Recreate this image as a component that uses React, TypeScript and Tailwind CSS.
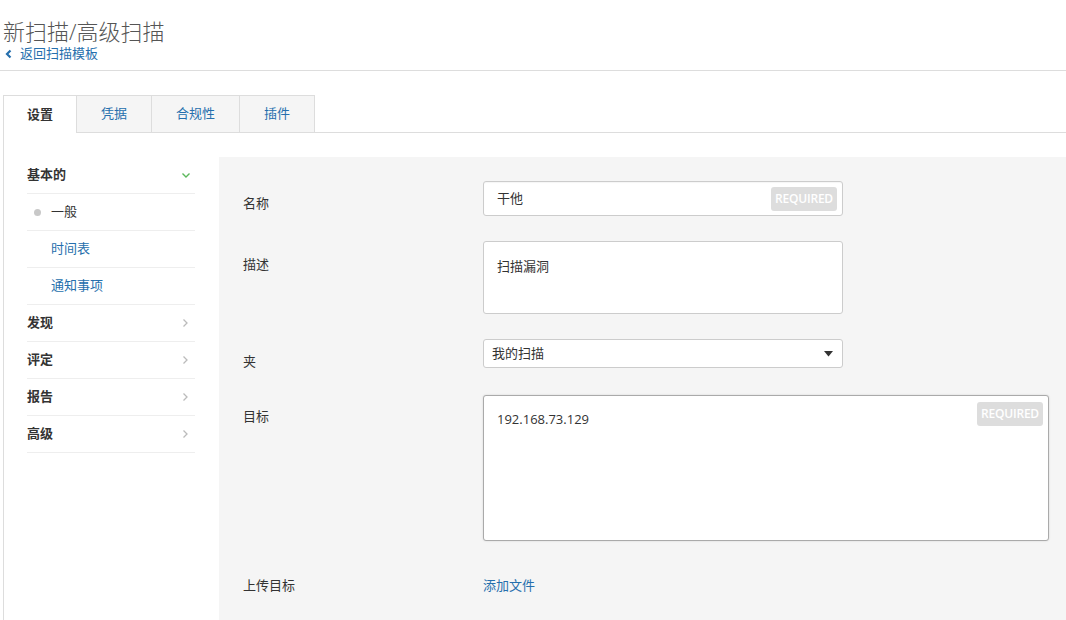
import React from "react";

const font = { fontFamily: '"Open Sans", "Noto Sans CJK SC", sans-serif' };

function ChevronRight() {
  return (
    <svg width="7" height="10" viewBox="0 0 7 10" className="shrink-0">
      <path d="M1.5 1.5 L5 5 L1.5 8.5" fill="none" stroke="#bbbbbb" strokeWidth="1.3" />
    </svg>
  );
}

function ChevronDown() {
  return (
    <svg width="10" height="7" viewBox="0 0 10 7" className="shrink-0">
      <path d="M1.5 1.5 L5 5 L8.5 1.5" fill="none" stroke="#5cb85c" strokeWidth="1.4" />
    </svg>
  );
}

function Required() {
  return (
    <span className="absolute flex items-center justify-center w-[66px] h-[24px] rounded-[3px] bg-[#dddddd] text-white text-[12px] font-semibold tracking-[-0.2px]">
      REQUIRED
    </span>
  );
}

export default function App() {
  const tabs = [
    { label: "设置", active: true, w: "w-[74px]" },
    { label: "凭据", active: false, w: "w-[75px]" },
    { label: "合规性", active: false, w: "w-[88px]" },
    { label: "插件", active: false, w: "w-[75px]" },
  ];
  const groups = ["发现", "评定", "报告", "高级"];
  return (
    <div className="w-[1066px] h-[620px] overflow-hidden bg-white text-[#333]" style={font}>
      {/* header */}
      <div className="border-b border-[#dddddd] pt-[17px] pb-[7px] pl-[3px]">
        <h1 className="text-[22px] leading-[28px] text-[#555555] font-light">新扫描/高级扫描</h1>
        <a className="flex items-center h-[18px] text-[13px] text-[#266fad] cursor-pointer">
          <svg width="8" height="10" viewBox="0 0 8 10" className="ml-[2px] mr-[7px]">
            <path d="M5.5 1.5 L2 5 L5.5 8.5" fill="none" stroke="#266fad" strokeWidth="2.2" />
          </svg>
          返回扫描模板
        </a>
      </div>

      {/* tabs */}
      <div className="flex mt-[24px] pl-[3px]">
        {tabs.map((t, i) =>
          t.active ? (
            <div
              key={i}
              className={`${t.w} h-[38px] flex items-center justify-center border border-b-0 border-[#dddddd] bg-white text-[13px] font-semibold text-[#333]`}
            >
              {t.label}
            </div>
          ) : (
            <div
              key={i}
              className={`${t.w} h-[38px] flex items-center justify-center border border-l-0 border-[#dddddd] bg-[#f5f5f5] text-[13px] text-[#266fad]`}
            >
              {t.label}
            </div>
          )
        )}
        <div className="flex-1 border-b border-[#dddddd]" />
      </div>

      {/* body */}
      <div className="flex ml-[3px] border-l border-[#dddddd] pt-[24px] h-[500px]">
        {/* sidebar */}
        <div className="w-[168px] ml-[23px] mr-[24px] shrink-0 text-[13px]">
          <div className="h-[37px] flex items-center justify-between border-b border-[#eeeeee] font-semibold pr-[4px]">
            <span>基本的</span>
            <ChevronDown />
          </div>
          <div className="h-[37px] flex items-center border-b border-[#eeeeee] pl-[7px]">
            <span className="w-[7px] h-[7px] rounded-full bg-[#c8c8c8] mr-[10px]" />
            <span>一般</span>
          </div>
          <div className="h-[37px] flex items-center border-b border-[#eeeeee] pl-[24px] text-[#266fad]">时间表</div>
          <div className="h-[37px] flex items-center border-b border-[#eeeeee] pl-[24px] text-[#266fad]">通知事项</div>
          {groups.map((g) => (
            <div key={g} className="h-[37px] flex items-center justify-between border-b border-[#eeeeee] font-semibold pr-[6px]">
              <span>{g}</span>
              <ChevronRight />
            </div>
          ))}
        </div>

        {/* form panel */}
        <div className="flex-1 bg-[#f5f5f5] pt-[24px] pl-[24px] text-[13px]">
          {/* name */}
          <div className="flex">
            <div className="w-[240px] pt-[13px] leading-[18px]">名称</div>
            <div className="relative w-[360px] h-[35px] bg-white border border-[#cccccc] rounded-[3px] flex items-center pl-[13px] shadow-[inset_0_1px_1px_rgba(0,0,0,0.04)]">
              <span>干他</span>
              <div className="absolute right-[5px] top-[5px]">
                <div className="relative w-[66px] h-[24px]">
                  <Required />
                </div>
              </div>
            </div>
          </div>
          {/* description */}
          <div className="flex mt-[25px]">
            <div className="w-[240px] pt-[14px] leading-[18px]">描述</div>
            <div className="w-[360px] h-[73px] bg-white border border-[#cccccc] rounded-[3px] pl-[13px] pt-[15px] leading-[18px]">
              扫描漏洞
            </div>
          </div>
          {/* folder */}
          <div className="flex mt-[25px]">
            <div className="w-[240px] pt-[13px] leading-[18px]">夹</div>
            <div className="w-[360px] h-[29px] bg-white border border-[#cccccc] rounded-[3px] flex items-center justify-between pl-[8px] pr-[9px]">
              <span>我的扫描</span>
              <svg width="9" height="6" viewBox="0 0 9 6">
                <path d="M0 0 L9 0 L4.5 5.5 Z" fill="#333" />
              </svg>
            </div>
          </div>
          {/* target */}
          <div className="flex mt-[25px]">
            <div className="w-[240px] pt-[12px] leading-[18px]">目标</div>
            <div className="relative w-[566px] h-[146px] bg-white border border-[#aaaaaa] rounded-[3px] pl-[13px] pt-[14px] leading-[18px] shadow-[0_0_2px_rgba(0,0,0,0.15)]">
              192.168.73.129
              <div className="absolute right-[5px] top-[6px] w-[66px] h-[24px]">
                <Required />
              </div>
            </div>
          </div>
          {/* upload */}
          <div className="flex mt-[35px] leading-[18px]">
            <div className="w-[240px]">上传目标</div>
            <a className="text-[#266fad] cursor-pointer">添加文件</a>
          </div>
        </div>
      </div>
    </div>
  );
}
